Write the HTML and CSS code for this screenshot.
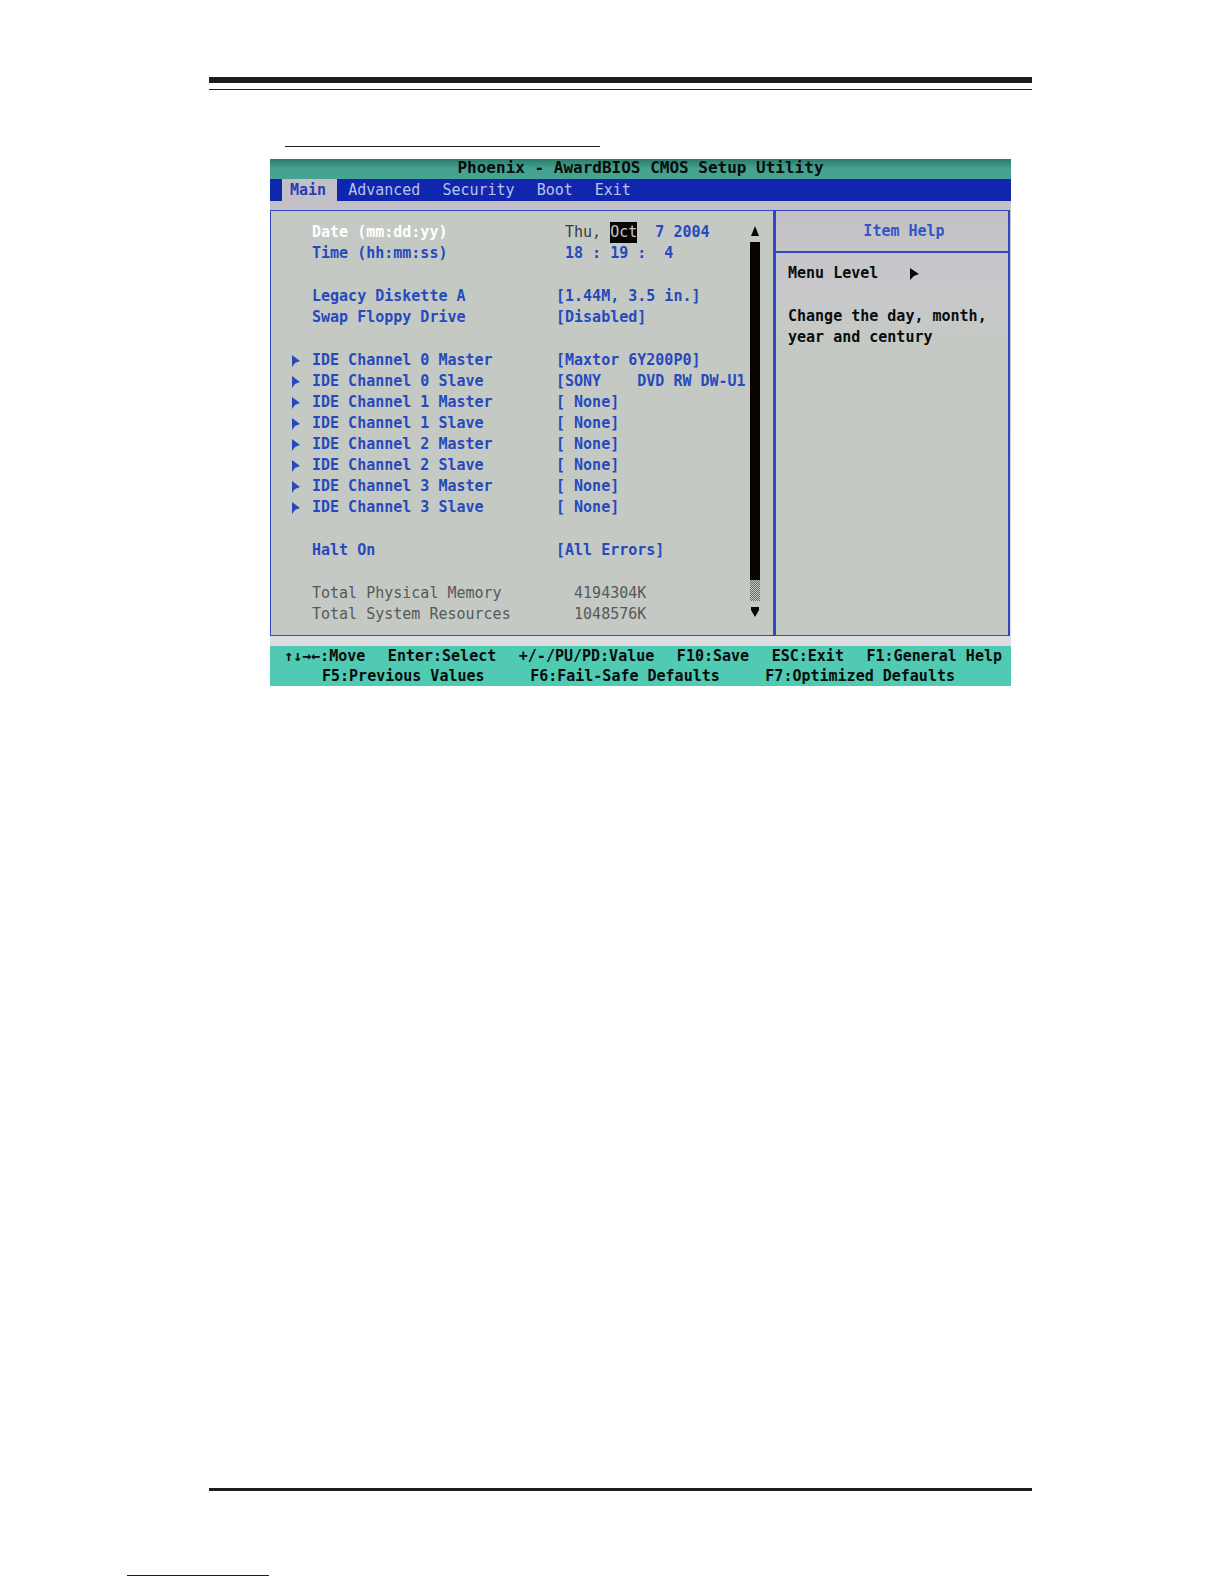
FILE: index.html
```html
<!DOCTYPE html>
<html lang="en">
<head>
<meta charset="utf-8">
<meta name="viewport" content="width=device-width, initial-scale=1">
<title>Phoenix - AwardBIOS CMOS Setup Utility</title>
<link rel="stylesheet" href="styles.css">
</head>
<body>
<div class="page">
  <header class="page-head"></header>
  <main class="content">
    <div class="heading-rule"></div>
    <section class="bios">
      <h1 class="title">Phoenix - AwardBIOS CMOS Setup Utility</h1>
      <nav class="menu">
        <button class="tab active" type="button">Main</button>
        <button class="tab" type="button">Advanced</button>
        <button class="tab" type="button">Security</button>
        <button class="tab" type="button">Boot</button>
        <button class="tab" type="button">Exit</button>
      </nav>
      <div class="panels">
        <div class="settings">
          <table class="items">
            <tbody>
              <tr class="selected"><td class="mark"></td><th scope="row">Date (mm:dd:yy)</th><td> <span class="day">Thu,</span> <span class="cursor">Oct</span>  7 2004</td></tr>
              <tr><td class="mark"></td><th scope="row">Time (hh:mm:ss)</th><td> 18 : 19 :  4</td></tr>
              <tr class="gap"><td colspan="3"></td></tr>
              <tr><td class="mark"></td><th scope="row">Legacy Diskette A</th><td>[1.44M, 3.5 in.]</td></tr>
              <tr><td class="mark"></td><th scope="row">Swap Floppy Drive</th><td>[Disabled]</td></tr>
              <tr class="gap"><td colspan="3"></td></tr>
              <tr><td class="mark"><svg class="arrow" viewBox="0 0 8 12"><path d="M0 0L8 6L3 8L0 12Z"/></svg></td><th scope="row">IDE Channel 0 Master</th><td>[Maxtor 6Y200P0]</td></tr>
              <tr><td class="mark"><svg class="arrow" viewBox="0 0 8 12"><path d="M0 0L8 6L3 8L0 12Z"/></svg></td><th scope="row">IDE Channel 0 Slave</th><td>[SONY    DVD RW DW-U1</td></tr>
              <tr><td class="mark"><svg class="arrow" viewBox="0 0 8 12"><path d="M0 0L8 6L3 8L0 12Z"/></svg></td><th scope="row">IDE Channel 1 Master</th><td>[ None]</td></tr>
              <tr><td class="mark"><svg class="arrow" viewBox="0 0 8 12"><path d="M0 0L8 6L3 8L0 12Z"/></svg></td><th scope="row">IDE Channel 1 Slave</th><td>[ None]</td></tr>
              <tr><td class="mark"><svg class="arrow" viewBox="0 0 8 12"><path d="M0 0L8 6L3 8L0 12Z"/></svg></td><th scope="row">IDE Channel 2 Master</th><td>[ None]</td></tr>
              <tr><td class="mark"><svg class="arrow" viewBox="0 0 8 12"><path d="M0 0L8 6L3 8L0 12Z"/></svg></td><th scope="row">IDE Channel 2 Slave</th><td>[ None]</td></tr>
              <tr><td class="mark"><svg class="arrow" viewBox="0 0 8 12"><path d="M0 0L8 6L3 8L0 12Z"/></svg></td><th scope="row">IDE Channel 3 Master</th><td>[ None]</td></tr>
              <tr><td class="mark"><svg class="arrow" viewBox="0 0 8 12"><path d="M0 0L8 6L3 8L0 12Z"/></svg></td><th scope="row">IDE Channel 3 Slave</th><td>[ None]</td></tr>
              <tr class="gap"><td colspan="3"></td></tr>
              <tr><td class="mark"></td><th scope="row">Halt On</th><td>[All Errors]</td></tr>
              <tr class="gap"><td colspan="3"></td></tr>
              <tr class="info"><td class="mark"></td><th scope="row">Total Physical Memory</th><td>  4194304K</td></tr>
              <tr class="info"><td class="mark"></td><th scope="row">Total System Resources</th><td>  1048576K</td></tr>
            </tbody>
          </table>
          <div class="scroll">
            <svg class="tip" viewBox="0 0 10 10"><path d="M5 0L9 10H1Z"/></svg>
            <div class="thumb"></div>
            <div class="track"></div>
            <svg class="tip" viewBox="0 0 10 10"><path d="M1 0H9V3L5 10L1 3Z"/></svg>
          </div>
        </div>
        <aside class="help">
          <h2 class="help-title">Item Help</h2>
          <div class="help-body">
            <p class="level">Menu Level <svg class="level-arrow" viewBox="0 0 9 12"><path d="M0 0L9 6L4 8L0 12Z"/></svg></p>
            <p>Change the day, month, year and century</p>
          </div>
        </aside>
      </div>
      <footer class="keys">
        <div class="key-row"><span>↑↓→←:Move</span><span>Enter:Select</span><span>+/-/PU/PD:Value</span><span>F10:Save</span><span>ESC:Exit</span><span>F1:General Help</span></div>
        <div class="key-row second"><span>F5:Previous Values</span><span>F6:Fail-Safe Defaults</span><span>F7:Optimized Defaults</span></div>
      </footer>
    </section>
  </main>
  <div class="page-foot"></div>
  <div class="link-rule"></div>
</div>
</body>
</html>
```
FILE: styles.css
```css
* {
  box-sizing: border-box;
}

body {
  margin: 0;
  background: #fff;
  font-family: "DejaVu Sans Mono", "Liberation Mono", monospace;
  font-size: 15px;
  line-height: 21px;
}

h1, h2, p {
  margin: 0;
  font-size: 15px;
}

.page {
  display: flex;
  flex-direction: column;
  min-height: 100vh;
  padding: 77px 192px 8px 209px;
}

.page-head {
  height: 13px;
  border-top: 6px solid #1f1d1e;
  border-bottom: 1px solid #1f1d1e;
}

.content {
  flex: 1;
  padding: 56px 21px 0 61px;
}

.heading-rule {
  width: 315px;
  height: 1px;
  margin: 0 0 12px 15px;
  background: #1f1d1e;
}

.bios {
  background: linear-gradient(#bfbac2, #c6c3c9 80px, #dfe0e4);
  color: #080c0c;
  font-weight: bold;
}

.title {
  height: 20px;
  background: linear-gradient(#287c69, #45a18f 9px, #45a492);
  font-size: 16px;
  line-height: 18px;
  text-align: center;
}

.menu {
  display: flex;
  height: 22px;
  padding-left: 12px;
  background: #1126ae;
}

.tab {
  padding: 0 11px;
  border: 0;
  background: none;
  color: #b9c3ed;
  font: 15px/20px "DejaVu Sans Mono", "Liberation Mono", monospace;
}

.tab.active {
  padding-left: 8px;
  background: #c2c0c6;
  color: #2b3bb3;
  font-weight: bold;
}

.panels {
  display: flex;
  margin: 9px 1px 10px 0;
  border: 1px solid #3148c3;
  border-right-width: 2px;
  background: #c5c9c4;
}

.settings {
  display: flex;
  flex: 1;
  justify-content: space-between;
  padding: 11px 13px 10px 21px;
}

.items {
  border-collapse: collapse;
  color: #2749bd;
  white-space: pre;
}

.items tr {
  height: 21px;
}

.items .gap {
  height: 22px;
}

.items td,
.items th {
  padding: 0;
  text-align: left;
}

.items th {
  width: 244px;
}

.items .mark {
  width: 20px;
}

.arrow {
  display: block;
  width: 8px;
  height: 12px;
  fill: #2749bd;
}

.selected th {
  color: #fff;
}

.day {
  color: #393d3d;
  font-weight: normal;
}

.cursor {
  display: inline-block;
  background: #050505;
  color: #c5c9c4;
  font-weight: normal;
}

.info th,
.info td {
  color: #55595a;
  font-weight: normal;
}

.scroll {
  display: flex;
  flex-direction: column;
  width: 10px;
  padding: 4px 0 8px;
}

.tip {
  display: block;
  width: 10px;
  height: 10px;
  fill: #0a0505;
}

.thumb {
  flex: 1;
  margin-top: 6px;
  background: #080203;
}

.track {
  height: 21px;
  margin-bottom: 6px;
  background: repeating-conic-gradient(#686a68 0 25%, #c5c9c4 0 50%) 0 0 / 2px 2px;
}

.help {
  width: 235px;
  border-left: 3px solid #3148c3;
  background: linear-gradient(#c3c1c5, #c8c8cb 80px, #c5c9c4 130px);
}

.help-title {
  height: 42px;
  padding-left: 24px;
  border-bottom: 2px solid #3148c3;
  color: #3455c4;
  line-height: 40px;
  text-align: center;
}

.help-body {
  display: flex;
  flex-direction: column;
  gap: 22px;
  padding: 10px 12px;
}

.level {
  display: flex;
  align-items: center;
  gap: 32px;
}

.level-arrow {
  width: 9px;
  height: 12px;
  fill: #080c0c;
}

.keys {
  height: 40px;
  background: #50cab2;
}

.key-row {
  display: flex;
  justify-content: space-between;
  padding: 0 9px 0 14px;
  line-height: 20px;
}

.key-row.second {
  padding: 0 56px 0 52px;
}

.page-foot {
  height: 3px;
  margin-bottom: 84px;
  background: #1f1d1e;
}

.link-rule {
  width: 142px;
  height: 1px;
  margin-left: -82px;
  background: #10107c;
}
```
